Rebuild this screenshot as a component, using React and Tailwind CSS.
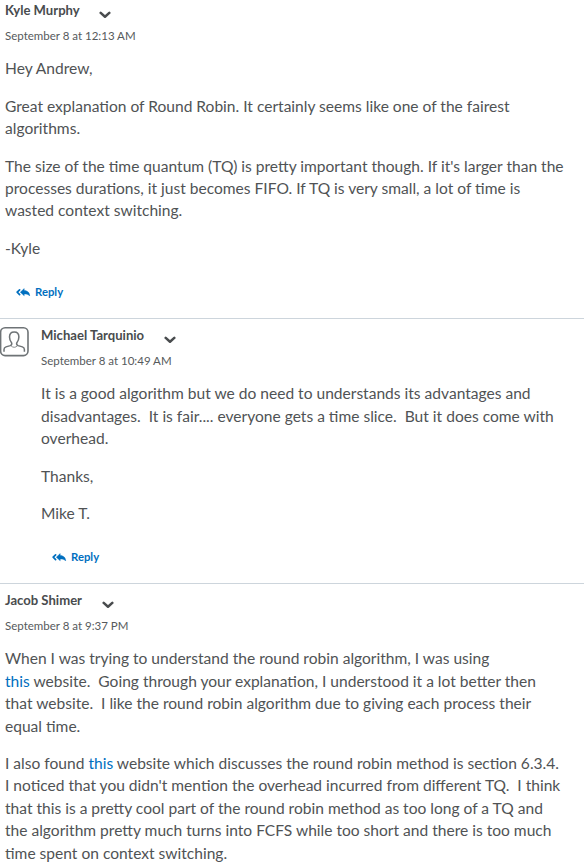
const name = 'text-[13.1px] leading-[20px] font-bold text-[#494c4e]';
const date = 'text-[11.5px] leading-[16px] text-[#565a5c] mt-[8px]';
const body = 'mt-[13.3px] flex flex-col gap-[15px] text-[15.57px] leading-[22.4px] text-[#505355] whitespace-pre';

function Chevron() {
  return (
    <svg className="mt-[11px] -ml-[0.5px] h-[8px] w-3" viewBox="0 0 12 8" fill="none" stroke="#494c4e" strokeWidth="2.5" strokeLinecap="round" strokeLinejoin="round">
      <path d="M1.7 1.9 L6 5.8 L10.3 1.9" />
    </svg>
  );
}

function Header({ author, time }) {
  return (
    <header>
      <div className="flex items-start gap-5">
        <h2 className={name}>{author}</h2>
        <Chevron />
      </div>
      <p className={date}>{time}</p>
    </header>
  );
}

function Reply() {
  return (
    <button className="mt-[25px] ml-[11px] flex items-center gap-1 text-[11.3px] leading-4 font-bold text-[#006fbf]">
      <svg className="h-[9px] w-[15px]" viewBox="0 0 15 9">
        <path d="M3.6 1.8 L1.2 4.2 L3.6 6.6" fill="none" stroke="#006fbf" strokeWidth="1.7" strokeLinecap="round" strokeLinejoin="round" />
        <path d="M8.2 0.6 V2.5 C11.6 2.6 13.7 4.6 13.7 8 C12.6 6.5 11 6 8.2 6 V7.8 L4.3 4.2 Z" fill="#006fbf" stroke="#006fbf" strokeWidth="0.4" strokeLinejoin="round" />
      </svg>
      Reply
    </button>
  );
}

function Avatar() {
  return (
    <svg className="mt-2 h-[30px] w-[29px] shrink-0" viewBox="0 0 29 30" fill="none" stroke="#6e7376">
      <rect x="0.6" y="0.8" width="27.4" height="27.8" rx="4.5" strokeWidth="1.6" />
      <path d="M4 24.8 V22.5 Q4 20.6 6 19.9 L10.3 18.6 Q12.2 17.8 11.7 16 Q9.5 13.4 9.5 10 Q9.5 4.9 14.2 4.9 Q18.9 4.9 18.9 10 Q18.9 13.4 16.7 16 Q16.2 17.8 18.1 18.6 L22.4 19.9 Q24.4 20.6 24.4 22.5 V24.8" strokeWidth="1.5" />
      <path d="M10.8 18.6 Q14.2 22 17.6 18.6" strokeWidth="0.8" />
    </svg>
  );
}

const Link = () => <a className="text-[#006fbf]">this</a>;

export default function App() {
  return (
    <main className="h-[866px] w-[584px] overflow-hidden bg-white font-[Lato,sans-serif]">
      <section className="h-[318px] pl-[5px]">
        <Header author="Kyle Murphy" time="September 8 at 12:13 AM" />
        <div className={body}>
          <p>Hey Andrew,</p>
          <p>{'Great explanation of Round Robin. It certainly seems like one of the fairest\nalgorithms.'}</p>
          <p>{"The size of the time quantum (TQ) is pretty important though. If it's larger than the\nprocesses durations, it just becomes FIFO. If TQ is very small, a lot of time is\nwasted context switching."}</p>
          <p>-Kyle</p>
        </div>
        <Reply />
      </section>
      <section className="flex h-[265px] gap-3 border-t border-[#cdd5dc]">
        <Avatar />
        <div className="pt-[6px]">
          <Header author="Michael Tarquinio" time="September 8 at 10:49 AM" />
          <div className={body}>
            <p>{'It is a good algorithm but we do need to understands its advantages and\ndisadvantages.  It is fair.... everyone gets a time slice.  But it does come with\noverhead.'}</p>
            <p>Thanks,</p>
            <p>Mike T.</p>
          </div>
          <Reply />
        </div>
      </section>
      <section className="border-t border-[#cdd5dc] pl-[5px] pt-[6px]">
        <Header author="Jacob Shimer" time="September 8 at 9:37 PM" />
        <div className={body}>
          <p>{'When I was trying to understand the round robin algorithm, I was using\n'}<Link />{' website.  Going through your explanation, I understood it a lot better then\nthat website.  I like the round robin algorithm due to giving each process their\nequal time.'}</p>
          <p>{'I also found '}<Link />{" website which discusses the round robin method is section 6.3.4.\nI noticed that you didn't mention the overhead incurred from different TQ.  I think\nthat this is a pretty cool part of the round robin method as too long of a TQ and\nthe algorithm pretty much turns into FCFS while too short and there is too much\ntime spent on context switching."}</p>
        </div>
      </section>
    </main>
  );
}
